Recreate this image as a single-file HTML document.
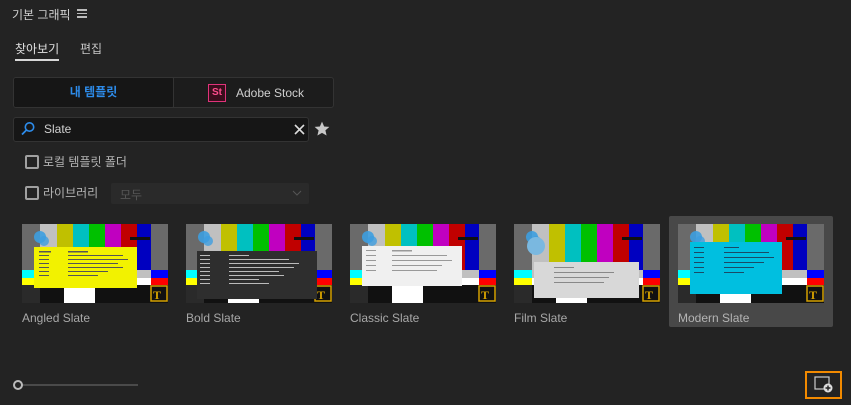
<!DOCTYPE html>
<html><head><meta charset="utf-8"><style>
*{margin:0;padding:0;box-sizing:border-box}
body{width:851px;height:405px;background:#232323;font-family:"Liberation Sans","Noto Sans CJK KR",sans-serif;color:#c8c8c8;position:relative;overflow:hidden}
.a{position:absolute}
.cb{position:absolute;width:14px;height:14px;border:2px solid #a0a0a0;border-radius:2px}
.lbl{font-size:12px;color:#b4b4b4}
svg.t{position:absolute;width:146px;height:79px}
</style></head><body>
<div class="a" style="left:12px;top:6px;font-size:12px;color:#d0d0d0">기본 그래픽</div>
<div class="a" style="left:77px;top:9px;width:10px;height:1.5px;background:#bbb"></div>
<div class="a" style="left:77px;top:12.5px;width:10px;height:1.5px;background:#bbb"></div>
<div class="a" style="left:77px;top:16px;width:10px;height:1.5px;background:#bbb"></div>
<div class="a" style="left:15px;top:40px;font-size:12px;color:#e0e0e0">찾아보기</div>
<div class="a" style="left:15px;top:59px;width:44px;height:2px;background:#d8d8d8"></div>
<div class="a" style="left:80px;top:40px;font-size:12px;color:#c8c8c8">편집</div>
<div class="a" style="left:13px;top:77px;width:321px;height:31px;border:1px solid #333;border-radius:3px;background:#1c1c1c"></div>
<div class="a" style="left:14px;top:78px;width:159px;height:29px;background:#161616;border-radius:2px;text-align:center;line-height:29px;font-size:12px;font-weight:bold;color:#2d8ceb">내 템플릿</div>
<div class="a" style="left:173px;top:78px;width:1px;height:29px;background:#333"></div>
<div class="a" style="left:208px;top:84px;width:18px;height:18px;background:#3a0d1c;border:1px solid #e0337a;color:#ff4d8d;font-size:10px;font-weight:bold;text-align:center;line-height:16px">St</div>
<div class="a" style="left:236px;top:86px;font-size:12px;color:#cfcfcf">Adobe Stock</div>
<div class="a" style="left:13px;top:117px;width:296px;height:25px;background:#161616;border:1px solid #333;border-radius:3px"></div>
<svg class="a" style="left:20px;top:121px" width="16" height="16" viewBox="0 0 16 16"><circle cx="9.5" cy="6" r="4.2" fill="none" stroke="#2d8ceb" stroke-width="1.6"/><line x1="6.5" y1="9" x2="2" y2="13.5" stroke="#2d8ceb" stroke-width="1.8"/></svg>
<div class="a" style="left:44px;top:122px;font-size:12px;color:#d0d0d0">Slate</div>
<svg class="a" style="left:294px;top:124px" width="11" height="11"><path d="M1 1L10 10M10 1L1 10" stroke="#ddd" stroke-width="1.6"/></svg>
<svg class="a" style="left:314px;top:121px" width="16" height="16" viewBox="0 0 24 24"><path d="M12 1l3.2 7.2 7.8.7-5.9 5.2 1.8 7.7L12 17.8 5.1 21.8l1.8-7.7L1 8.9l7.8-.7z" fill="#c8c8c8"/></svg>
<div class="cb" style="left:25px;top:155px"></div><div class="a lbl" style="left:43px;top:153px">로컬 템플릿 폴더</div>
<div class="cb" style="left:25px;top:186px"></div><div class="a lbl" style="left:43px;top:184px">라이브러리</div>
<div class="a" style="left:111px;top:183px;width:198px;height:21px;background:#2a2a2a;border-radius:2px"></div>
<div class="a" style="left:120px;top:186px;font-size:12px;color:#555">모두</div>
<svg class="a" style="left:292px;top:190px" width="10" height="6"><path d="M1 1L5 5L9 1" stroke="#555" fill="none"/></svg>

<div class="a" style="left:669px;top:216px;width:164px;height:111px;background:#484848;border-radius:2px"></div>

<svg width="0" height="0" style="position:absolute"><defs>
<g id="bars">
<rect width="146" height="79" fill="#111"/>
<rect x="0" width="18" height="46" fill="#6a6a6a"/><rect x="18" width="17" height="46" fill="#c0c0c0"/><rect x="35" width="16" height="46" fill="#c0c000"/><rect x="51" width="16" height="46" fill="#00c0c0"/><rect x="67" width="16" height="46" fill="#00c000"/><rect x="83" width="16" height="46" fill="#c000c0"/><rect x="99" width="16" height="46" fill="#c00000"/><rect x="115" width="14" height="46" fill="#0000c0"/><rect x="129" width="17" height="46" fill="#6a6a6a"/>
<rect y="46" width="18" height="8" fill="#00ffff"/><rect x="18" y="46" width="111" height="8" fill="#c0c0c0"/><rect x="129" y="46" width="17" height="8" fill="#0000ff"/>
<rect y="54" width="18" height="7" fill="#ffff00"/><rect x="18" y="54" width="111" height="7" fill="#fff"/><rect x="129" y="54" width="17" height="7" fill="#ff0000"/>
<rect x="0" y="61" width="18" height="18" fill="#2a2a2a"/><rect x="42" y="61" width="31" height="18" fill="#fff"/>
<circle cx="18" cy="13" r="6" fill="#3d9ee0" opacity=".9"/><circle cx="22" cy="17" r="5" fill="#3d9ee0" opacity=".8"/>
<rect x="108" y="13" width="20" height="3" fill="#111"/>
<rect x="129" y="62" width="16" height="15" fill="#111" stroke="#d4a000" stroke-width="1.5"/><text x="131" y="75" font-size="12" font-weight="bold" fill="#d4a000" font-family="Liberation Serif">T</text>
</g></defs></svg>

<svg class="t" style="left:22px;top:224px"><use href="#bars"/><rect x="12" y="23" width="103" height="41" fill="#f2f200"/><g fill="#555"><rect x="17" y="27" width="12" height="1.5"/><rect x="46" y="27" width="20" height="1.5"/><rect x="17" y="31" width="10" height="1"/><rect x="46" y="31" width="55" height="1"/><rect x="17" y="35" width="10" height="1"/><rect x="46" y="35" width="60" height="1"/><rect x="17" y="39" width="10" height="1"/><rect x="46" y="39" width="50" height="1"/><rect x="17" y="43" width="10" height="1"/><rect x="46" y="43" width="55" height="1"/><rect x="17" y="47" width="10" height="1"/><rect x="46" y="47" width="40" height="1"/><rect x="17" y="51" width="10" height="1"/><rect x="46" y="51" width="30" height="1"/></g></svg>
<svg class="t" style="left:186px;top:224px"><use href="#bars"/><rect x="11" y="27" width="120" height="48" fill="#2e2e2e"/><g fill="#bbb"><rect x="14" y="31" width="10" height="1"/><rect x="43" y="31" width="20" height="1"/><rect x="14" y="35" width="10" height="1"/><rect x="43" y="35" width="60" height="1"/><rect x="14" y="39" width="10" height="1"/><rect x="43" y="39" width="70" height="1"/><rect x="14" y="43" width="10" height="1"/><rect x="43" y="43" width="65" height="1"/><rect x="14" y="47" width="10" height="1"/><rect x="43" y="47" width="50" height="1"/><rect x="14" y="51" width="10" height="1"/><rect x="43" y="51" width="55" height="1"/><rect x="14" y="55" width="10" height="1"/><rect x="43" y="55" width="30" height="1"/><rect x="14" y="59" width="10" height="1"/><rect x="43" y="59" width="40" height="1"/></g><rect x="42" y="76" width="31" height="3" fill="#fff"/></svg>
<svg class="t" style="left:350px;top:224px"><use href="#bars"/><rect x="12" y="22" width="100" height="40" fill="#f0f0f0"/><g fill="#999"><rect x="16" y="26" width="10" height="1"/><rect x="42" y="26" width="20" height="1.5"/><rect x="16" y="31" width="10" height="1"/><rect x="42" y="31" width="55" height="1"/><rect x="16" y="36" width="10" height="1"/><rect x="42" y="36" width="60" height="1"/><rect x="16" y="41" width="10" height="1"/><rect x="42" y="41" width="50" height="1"/><rect x="16" y="46" width="10" height="1"/><rect x="42" y="46" width="45" height="1"/></g></svg>
<svg class="t" style="left:514px;top:224px"><use href="#bars"/><rect x="20" y="38" width="105" height="36" fill="#d8d8d8"/><g fill="#888"><rect x="40" y="43" width="20" height="1"/><rect x="40" y="48" width="60" height="1"/><rect x="40" y="53" width="55" height="1"/><rect x="40" y="58" width="50" height="1"/></g><circle cx="22" cy="22" r="9" fill="#7ab8e0"/></svg>
<svg class="t" style="left:678px;top:224px"><use href="#bars"/><rect x="12" y="18" width="92" height="52" fill="#00bfe0"/><g fill="#1a4a66"><rect x="16" y="23" width="10" height="1"/><rect x="46" y="23" width="15" height="1"/><rect x="16" y="28" width="10" height="1"/><rect x="46" y="28" width="45" height="1"/><rect x="16" y="33" width="10" height="1"/><rect x="46" y="33" width="50" height="1"/><rect x="16" y="38" width="10" height="1"/><rect x="46" y="38" width="40" height="1"/><rect x="16" y="43" width="10" height="1"/><rect x="46" y="43" width="30" height="1"/><rect x="16" y="48" width="10" height="1"/><rect x="46" y="48" width="20" height="1"/></g></svg>

<div class="a" style="left:22px;top:311px;font-size:12px;color:#a8a8a8">Angled Slate</div>
<div class="a" style="left:186px;top:311px;font-size:12px;color:#a8a8a8">Bold Slate</div>
<div class="a" style="left:350px;top:311px;font-size:12px;color:#a8a8a8">Classic Slate</div>
<div class="a" style="left:514px;top:311px;font-size:12px;color:#a8a8a8">Film Slate</div>
<div class="a" style="left:678px;top:311px;font-size:12px;color:#b4b4b4">Modern Slate</div>

<div class="a" style="left:22px;top:384px;width:116px;height:2px;background:#4a4a4a"></div>
<div class="a" style="left:13px;top:380px;width:10px;height:10px;border:2px solid #bbb;border-radius:50%;background:#232323"></div>

<div class="a" style="left:805px;top:371px;width:37px;height:28px;border:2px solid #f28a00"></div>
<svg class="a" style="left:814px;top:376px" width="20" height="18"><rect x="1" y="1" width="14" height="12" fill="none" stroke="#ccc" stroke-width="1.2"/><circle cx="14" cy="12" r="4.5" fill="#ddd"/><path d="M14 9.5v5M11.5 12h5" stroke="#232323" stroke-width="1.4"/></svg>
</body></html>
